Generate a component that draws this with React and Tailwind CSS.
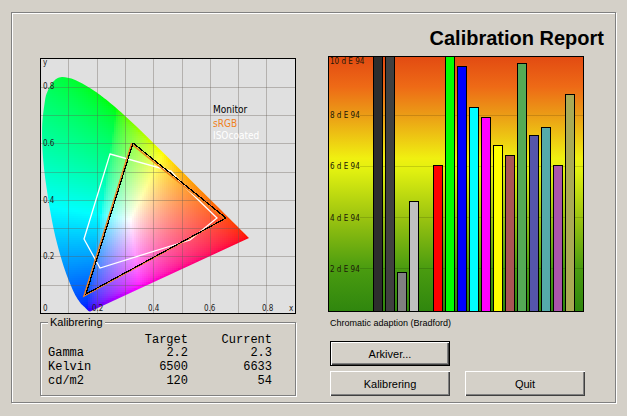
import React from 'react';

// spectral locus, CIE 1931 x/y
const LOCUS = [
  [0.174, 0.005], [0.17, 0.006], [0.165, 0.01], [0.157, 0.018], [0.144, 0.03],
  [0.136, 0.04], [0.124, 0.058], [0.11, 0.087], [0.091, 0.133], [0.069, 0.201],
  [0.045, 0.295], [0.024, 0.413], [0.008, 0.538], [0.004, 0.655], [0.014, 0.75],
  [0.024, 0.785], [0.039, 0.812], [0.055, 0.828], [0.074, 0.834], [0.094, 0.831],
  [0.114, 0.826], [0.155, 0.806], [0.193, 0.782], [0.23, 0.754], [0.302, 0.692],
  [0.373, 0.625], [0.444, 0.555], [0.512, 0.487], [0.575, 0.424], [0.627, 0.373],
  [0.666, 0.334], [0.735, 0.265],
];

const SIZE = 256;
const UNIT = 283;
const STEP = 2;

const toX = (x) => Math.round(x * UNIT);
const toY = (y) => Math.round(255 - y * UNIT);

const RED = [0.735, 0.265];
const GREEN = [0.27, 0.72];
const BLUE = [0.165, 0.01];
const WHITE = [0.32, 0.33];

// barycentric weights of a chromaticity inside the RGB primaries
const weights = ([x, y]) => {
  const d = (GREEN[1] - BLUE[1]) * (RED[0] - BLUE[0]) + (BLUE[0] - GREEN[0]) * (RED[1] - BLUE[1]);
  const r = ((GREEN[1] - BLUE[1]) * (x - BLUE[0]) + (BLUE[0] - GREEN[0]) * (y - BLUE[1])) / d;
  const g = ((BLUE[1] - RED[1]) * (x - BLUE[0]) + (RED[0] - BLUE[0]) * (y - BLUE[1])) / d;
  return [r, g, 1 - r - g];
};

const whiteWeights = weights(WHITE);

const colorAt = (x, y) => {
  const rgb = weights([x, y]).map((w, i) => Math.max(0, w / whiteWeights[i]));
  const max = Math.max(...rgb);
  const [r, g, b] = rgb.map((c) => Math.round(255 * Math.pow(c / max, 0.52)));
  return `rgb(${r},${g},${b})`;
};

const cells = [];
for (let py = 18; py < SIZE; py += STEP) {
  for (let px = 0; px < 210; px += STEP) {
    const x = (px + 1) / UNIT;
    const y = (254 - py) / UNIT;
    // skip what the clip path would throw away anyway
    if (x + y > 1.03 || y < (x - 0.2) * 0.46) continue;
    cells.push({ px, py, fill: colorAt(x, y) });
  }
}

// smooth curve through the locus points, closed by the purple line
const locusPath = () => {
  const p = LOCUS.map(([x, y]) => [x * UNIT + 1, 255 - y * UNIT]);
  let d = `M${p[0][0]},${p[0][1]}`;
  for (let i = 0; i < p.length - 1; i++) {
    const a = p[i - 1] || p[i];
    const b = p[i];
    const c = p[i + 1];
    const e = p[i + 2] || c;
    d += `C${b[0] + (c[0] - a[0]) / 6},${b[1] + (c[1] - a[1]) / 6} ${c[0] - (e[0] - b[0]) / 6},${c[1] - (e[1] - b[1]) / 6} ${c[0]},${c[1]}`;
  }
  return `${d}Z`;
};

const gridLines = [1, 2, 3, 4, 5, 6, 7, 8];

const bars = [
  { x: 45, top: 0, color: '#2d2d2d' },
  { x: 57, top: 0, color: '#404040' },
  { x: 69, top: 216, color: '#808080' },
  { x: 81, top: 145, color: '#c0c0c0' },
  { x: 105, top: 109, color: '#ff0000' },
  { x: 117, top: 0, color: '#00ff00' },
  { x: 129, top: 10, color: '#0000ff' },
  { x: 141, top: 51, color: '#00ffff' },
  { x: 153, top: 61, color: '#ff00ff' },
  { x: 165, top: 89, color: '#ffff00' },
  { x: 177, top: 99, color: '#aa5555' },
  { x: 189, top: 7, color: '#55aa55' },
  { x: 201, top: 79, color: '#5555aa' },
  { x: 213, top: 71, color: '#55aaaa' },
  { x: 225, top: 109, color: '#aa55aa' },
  { x: 237, top: 38, color: '#aaaa55' },
];

const deltaLabels = [
  { text: '10 d E 94', y: 8 },
  { text: '8 d E 94', y: 62, line: 59 },
  { text: '6 d E 94', y: 113, line: 110 },
  { text: '4 d E 94', y: 165, line: 161 },
  { text: '2 d E 94', y: 216, line: 212 },
];

const rows = [
  { name: 'Gamma', target: '2.2', current: '2.3' },
  { name: 'Kelvin', target: '6500', current: '6633' },
  { name: 'cd/m2', target: '120', current: '54' },
];

const GamutChart = () => (
  <svg
    viewBox="0 0 256 256"
    className="block w-full font-['DejaVu_Sans_Condensed','DejaVu_Sans',sans-serif] text-[8px]"
    role="img"
    aria-label="Gamut"
  >
    <defs>
      <clipPath id="locus">
        <path d={locusPath()} />
      </clipPath>
    </defs>
    <rect width="256" height="256" fill="#e0e0e0" />
    <g clipPath="url(#locus)">
      <g shapeRendering="crispEdges">
        {cells.map((c) => (
          <rect key={`${c.px}-${c.py}`} x={c.px} y={c.py} width={STEP} height={STEP} fill={c.fill} />
        ))}
      </g>
    </g>
    <g stroke="#605850" strokeOpacity="0.35">
      {gridLines.map((n) => (
        <React.Fragment key={n}>
          <line x1={toX(n / 10) + 0.5} y1="1" x2={toX(n / 10) + 0.5} y2="255" />
          <line x1="1" y1={toY(n / 10) + 0.5} x2="255" y2={toY(n / 10) + 0.5} />
        </React.Fragment>
      ))}
    </g>
    <g fill="none">
      <polygon points="70,96 131,113 146,130 177,160 150,182 60,210 44,181" stroke="#fff" strokeWidth="1.3" />
      <polygon points="91.5,86 184.5,161 44,238" stroke="#f08020" strokeWidth="1.5" />
      <polygon points="93,85 186,160 46,236" stroke="#000" strokeWidth="1.2" shapeRendering="crispEdges" />
    </g>
    <g fill="#202020">
      <text x="3" y="7">y</text>
      <text x="3" y="31">0.8</text>
      <text x="3" y="88">0.6</text>
      <text x="3" y="145">0.4</text>
      <text x="3" y="201">0.2</text>
      <text x="3" y="253">0</text>
      <text x="52" y="253">0.2</text>
      <text x="108" y="253">0.4</text>
      <text x="164" y="253">0.6</text>
      <text x="222" y="253">0.8</text>
      <text x="249" y="253">x</text>
    </g>
    <g className="text-[10px]">
      <text x="173" y="55" fill="#000">Monitor</text>
      <text x="173" y="69" fill="#f08020">sRGB</text>
      <text x="173" y="81" fill="#fff">ISOcoated</text>
    </g>
    <rect x="0.5" y="0.5" width="255" height="255" fill="none" stroke="#000" />
  </svg>
);

const DeltaChart = () => (
  <svg
    viewBox="0 0 256 256"
    className="block w-full font-['DejaVu_Sans_Condensed','DejaVu_Sans',sans-serif] text-[8px]"
    role="img"
    aria-label="Delta E"
  >
    <defs>
      <linearGradient id="quality" x1="0" y1="0" x2="0" y2="1">
        <stop offset="0" stopColor="#e24a12" />
        <stop offset="0.12" stopColor="#ee6a16" />
        <stop offset="0.23" stopColor="#eb9c16" />
        <stop offset="0.4" stopColor="#f0f010" />
        <stop offset="0.45" stopColor="#e0f010" />
        <stop offset="0.63" stopColor="#9cc410" />
        <stop offset="0.83" stopColor="#4a9c10" />
        <stop offset="1" stopColor="#2f860e" />
      </linearGradient>
    </defs>
    <rect width="256" height="256" fill="url(#quality)" />
    {deltaLabels.map((l) => (
      <g key={l.text}>
        {l.line && (
          <line x1="32" y1={l.line + 0.5} x2="255" y2={l.line + 0.5} stroke="#000" strokeOpacity="0.14" />
        )}
        <text x="2" y={l.y} fill="#201808">{l.text}</text>
      </g>
    ))}
    {bars.map((b) => (
      <rect
        key={b.x}
        x={b.x + 0.5}
        y={b.top + 0.5}
        width="9"
        height={255 - b.top}
        fill={b.color}
        stroke="#000"
      />
    ))}
    <rect x="0.5" y="0.5" width="255" height="255" fill="none" stroke="#000" />
  </svg>
);

const Button = ({ children, focused }) => (
  <button
    type="button"
    className={
      focused
        ? 'h-[25px] border border-black text-[11px] leading-4 shadow-[inset_1px_1px_0_#fff,inset_-1px_-1px_0_#404040,inset_-2px_-2px_0_#808080]'
        : 'h-[25px] text-[11px] leading-4 shadow-[inset_1px_1px_0_#fff,inset_-1px_-1px_0_#404040,inset_-2px_-2px_0_#808080]'
    }
  >
    {children}
  </button>
);

const App = () => {
  return (
    <div className="min-h-screen bg-[#d4d0c8] px-[11px] py-3 font-['Liberation_Sans',Arial,sans-serif] text-black">
      <main className="border border-[#808080] pt-[11px] pr-[31px] pb-[6px] pl-7 shadow-[1px_1px_0_#fff,inset_1px_1px_0_#fff]">
        <h1 className="-mr-5 text-right text-[20px] leading-7 font-bold">Calibration Report</h1>

        <div className="mt-1 grid grid-cols-2 gap-8">
          <section className="pt-0.5">
            <GamutChart />
            <fieldset className="border border-[#808080] px-[7px] pb-[7px] shadow-[1px_1px_0_#fff,inset_1px_1px_0_#fff]">
              <legend className="bg-[#d4d0c8] px-[2px] text-[11px] leading-4">Kalibrering</legend>
              <table className="mt-1 w-full table-fixed font-['Liberation_Mono','Courier_New',monospace] text-[12px]">
                <thead>
                  <tr className="h-3 leading-3">
                    <td className="w-1/4"></td>
                    <th scope="col" className="w-1/3 text-right font-normal">Target</th>
                    <th scope="col" className="pr-4 text-right font-normal">Current</th>
                  </tr>
                </thead>
                <tbody>
                  {rows.map((row) => (
                    <tr key={row.name} className="leading-[14px]">
                      <th scope="row" className="text-left font-normal">{row.name}</th>
                      <td className="text-right">{row.target}</td>
                      <td className="pr-4 text-right">{row.current}</td>
                    </tr>
                  ))}
                </tbody>
              </table>
            </fieldset>
          </section>

          <section>
            <DeltaChart />
            <p className="mt-[3px] pl-0.5 text-[9px] leading-4">Chromatic adaption (Bradford)</p>
            <div className="mt-[10px] -mr-px grid grid-cols-2 gap-x-[15px] gap-y-[5px] pl-0.5">
              <Button focused>Arkiver...</Button>
              <span></span>
              <Button>Kalibrering</Button>
              <Button>Quit</Button>
            </div>
          </section>
        </div>
      </main>
    </div>
  );
};

export default App;
